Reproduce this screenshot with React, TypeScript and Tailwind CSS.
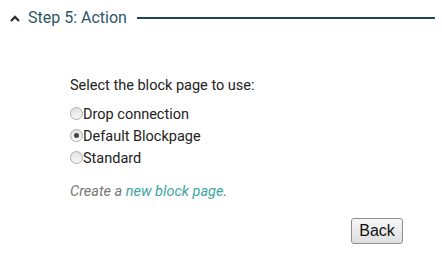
import React from 'react';

function Radio({ checked }: { checked?: boolean }) {
  return (
    <span className="mt-[3px] inline-flex h-[13px] w-[13px] shrink-0 items-center justify-center rounded-full border border-[#adadad] bg-gradient-to-b from-[#e2e2e2] to-[#f8f8f8]">
      {checked && <span className="h-[5px] w-[5px] rounded-full bg-[#444]"></span>}
    </span>
  );
}

export default function App() {
  const options = [
    { label: 'Drop connection', checked: false },
    { label: 'Default Blockpage', checked: true },
    { label: 'Standard', checked: false },
  ];

  return (
    <div className="h-[259px] w-[442px] bg-white font-['Roboto',sans-serif]">
      <div className="flex items-center pl-[10px] pr-[7px] pt-[9px]">
        <svg width="10" height="7" viewBox="0 0 10 7" className="mr-[8px]">
          <path d="M1 6 L5 2 L9 6" fill="none" stroke="#333" strokeWidth="2.4" />
        </svg>
        <span className="text-[16px] leading-[18px] text-[#2d5566]">Step 5: Action</span>
        <div className="ml-[10px] h-[2px] flex-1 bg-[#1d4657]"></div>
      </div>

      <div className="pl-[70px] pt-[51px]">
        <div className="text-[14.5px] leading-[16px] text-[#222]">Select the block page to use:</div>
        <div className="mt-[10px] flex flex-col">
          {options.map((o) => (
            <label key={o.label} className="flex items-start text-[14.5px] leading-[22px] text-[#222]">
              <Radio checked={o.checked} />
              <span>{o.label}</span>
            </label>
          ))}
        </div>
        <div className="mt-[14px] text-[14.5px] italic leading-[16px] text-[#777]">
          Create a <span className="text-[#3aa7a0]">new block page</span>.
        </div>
      </div>

      <div className="flex justify-end pr-[39px] pt-[18px]">
        <button className="h-[26px] w-[52px] rounded-[3px] border border-[#8f8f8f] bg-gradient-to-b from-[#f7f7f7] to-[#dedede] font-['Liberation_Sans',sans-serif] text-[16px] text-[#111]">
          Back
        </button>
      </div>
    </div>
  );
}
